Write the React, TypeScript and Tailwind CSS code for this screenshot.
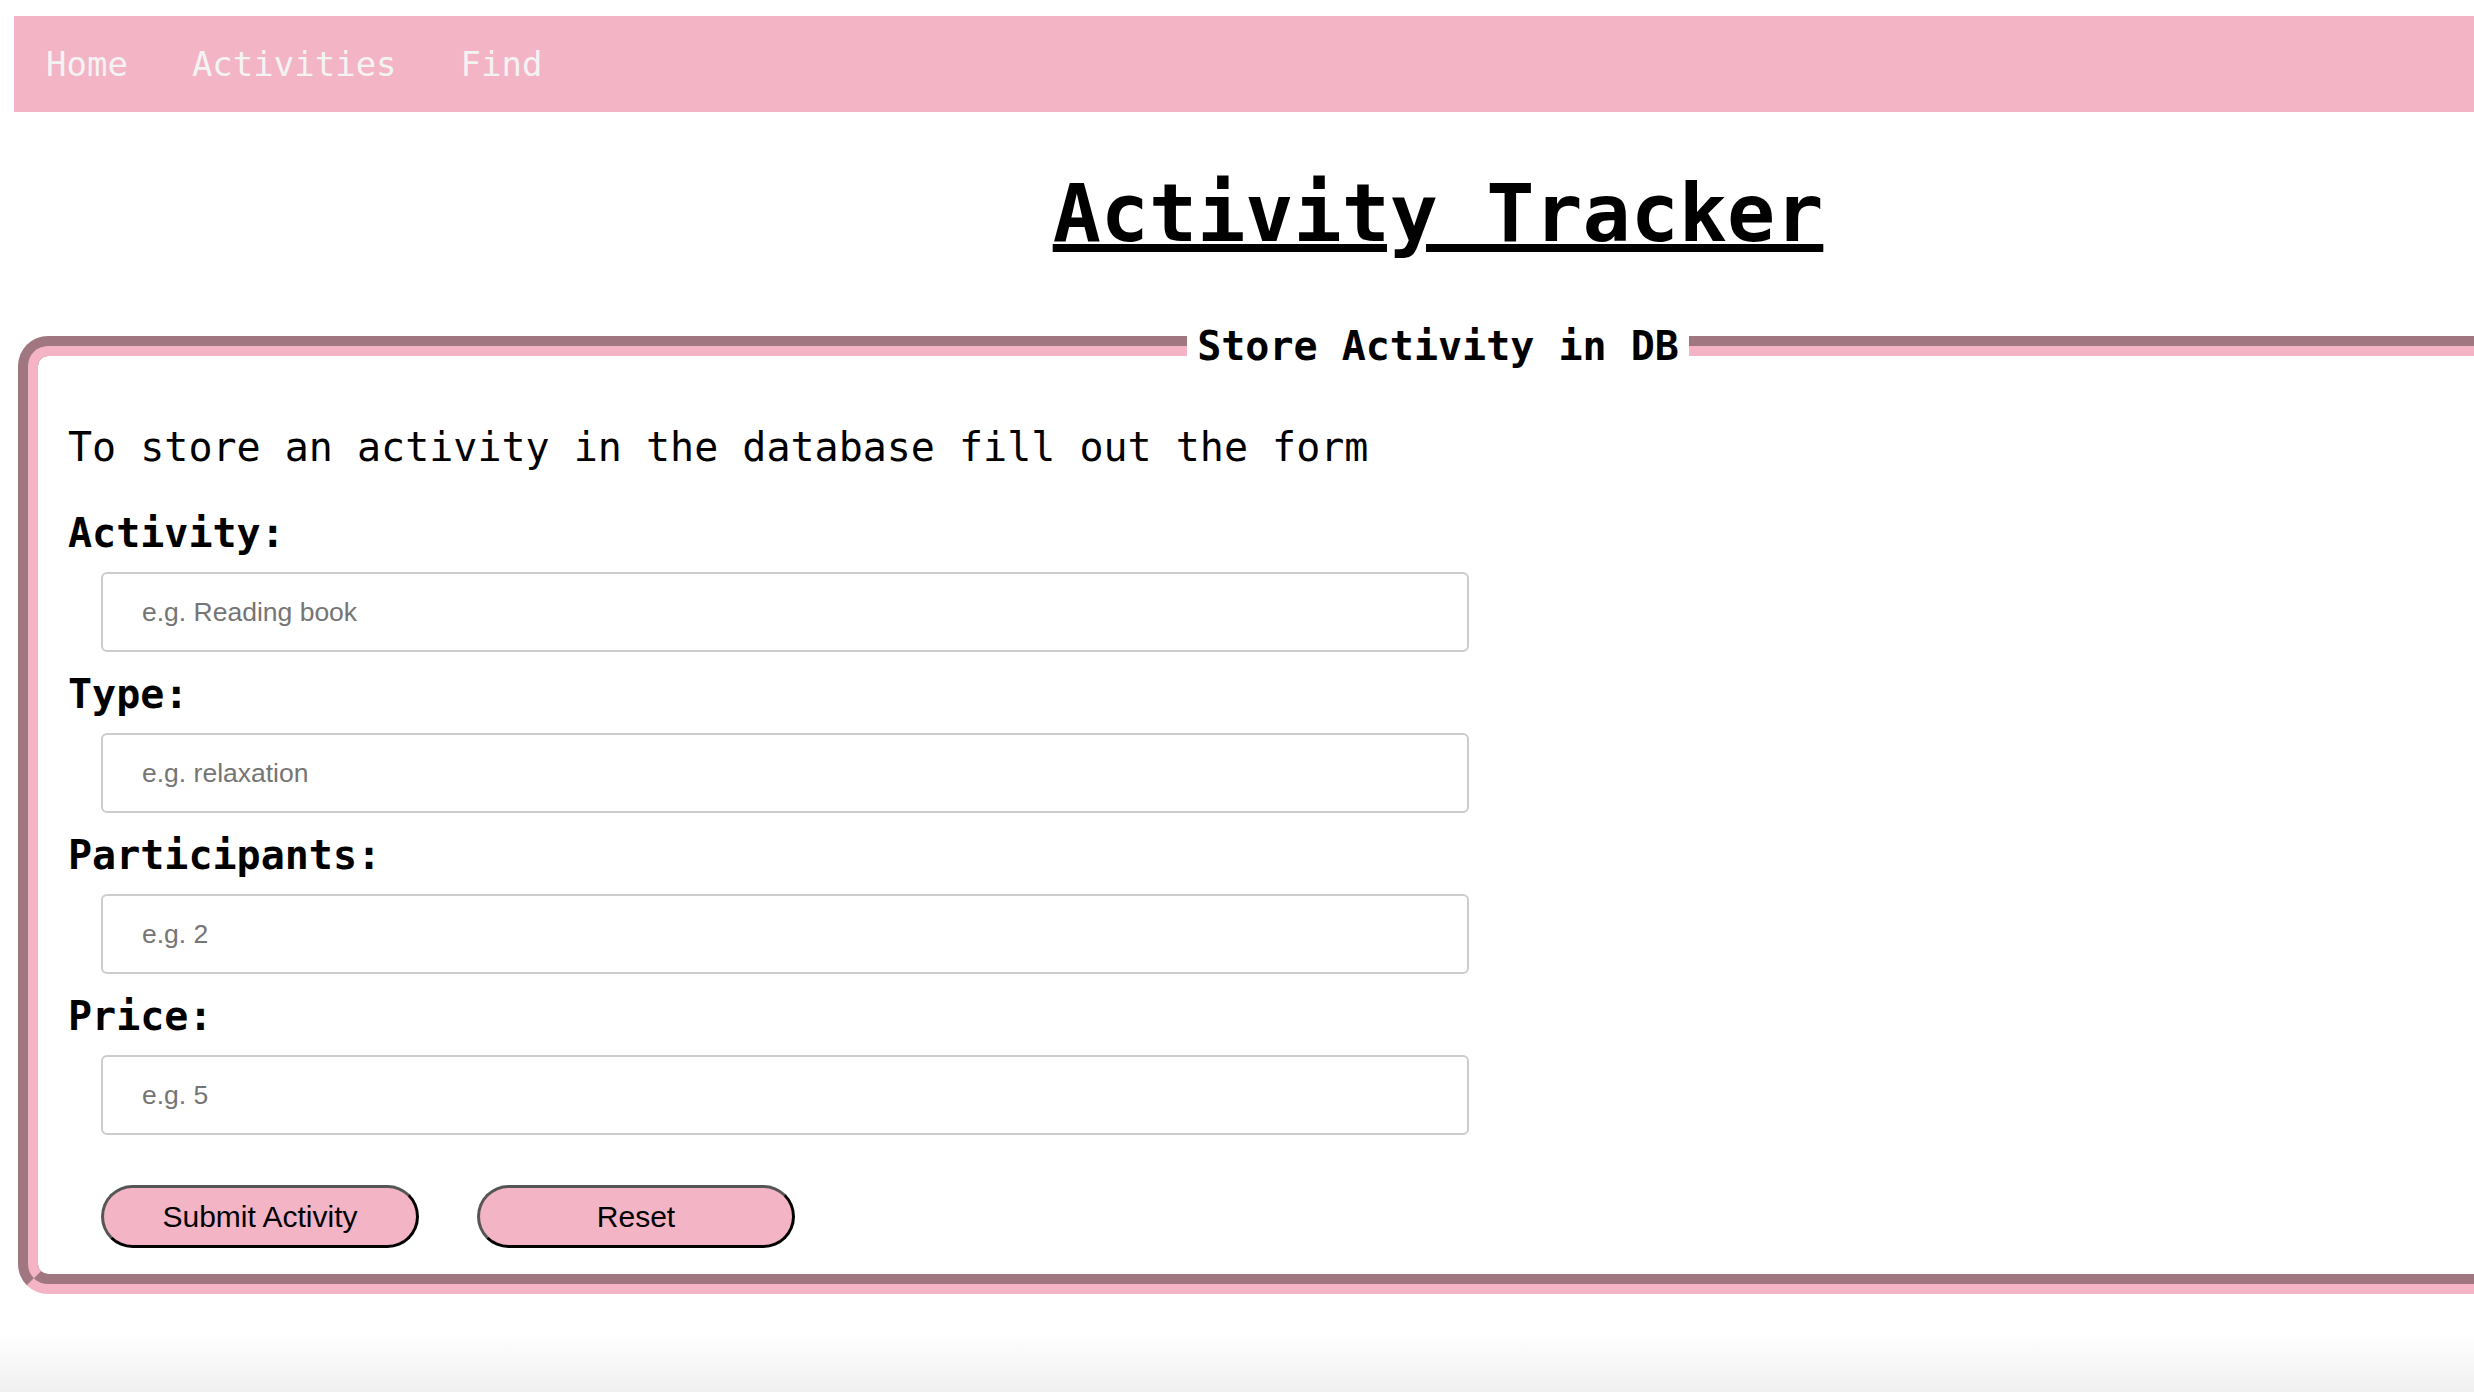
const mono = "font-['DejaVu_Sans_Mono',monospace]"

const fields = [
  { label: 'Activity:', placeholder: 'e.g. Reading book' },
  { label: 'Type:', placeholder: 'e.g. relaxation' },
  { label: 'Participants:', placeholder: 'e.g. 2' },
  { label: 'Price:', placeholder: 'e.g. 5' },
]

function NavBar() {
  return (
    <nav className="mt-[16px] h-[96px] bg-[#f3b4c5] flex items-center">
      {['Home', 'Activities', 'Find'].map((link) => (
        <a className="px-[32px] text-[34px] leading-[40px] text-[#f3f3f3]" href="#" key={link}>
          {link}
        </a>
      ))}
    </nav>
  )
}

function ActivityButton({ children }: { children: string }) {
  return (
    <button
      className="w-[318px] h-[63px] rounded-full bg-[#f3b4c5] border-[3px] border-t-[#555555] border-l-[#555555] border-r-black border-b-black text-[30px] text-black font-['Liberation_Sans',Arial,sans-serif]"
      type="button"
    >
      {children}
    </button>
  )
}

export default function App() {
  return (
    <div className={`w-screen h-screen overflow-hidden bg-white text-black ${mono}`}>
      <div className="w-[2876px] px-[14px]">
        <NavBar />

        <h1 className="mt-[55px] text-center text-[80px] leading-[93px] font-bold underline decoration-[8px] underline-offset-[3px]">
          Activity Tracker
        </h1>

        <fieldset className="mt-[63px] mx-[4px] border-[20px] [border-style:groove] border-[#f4b4c5] rounded-[30px] px-[30px] pb-[26px]">
          <legend className="mx-auto px-[10px] text-[40px] leading-[46px] font-bold">Store Activity in DB</legend>

          <p className="mt-[55px] text-[40px] leading-[46px]">To store an activity in the database fill out the form</p>

          <form className="mt-[40px]">
            {fields.map((field, i) => (
              <div className={i > 0 ? 'mt-[19px]' : ''} key={field.label}>
                <label className="block text-[40px] leading-[46px] font-bold">{field.label}</label>
                <input
                  className="block mt-[16px] ml-[33px] w-[1368px] h-[80px] border-2 border-[#cccccc] rounded-[6px] pl-[39px] text-[26.5px] font-['Liberation_Sans',Arial,sans-serif] placeholder:text-[#757575] outline-none"
                  placeholder={field.placeholder}
                  type="text"
                />
              </div>
            ))}

            <div className="mt-[50px] ml-[33px] flex gap-[58px]">
              <ActivityButton>Submit Activity</ActivityButton>
              <ActivityButton>Reset</ActivityButton>
            </div>
          </form>
        </fieldset>

        <div className="mt-[38px] h-[64px] -mx-[14px] bg-linear-to-b from-white to-[#efefef]"></div>
      </div>
    </div>
  )
}
